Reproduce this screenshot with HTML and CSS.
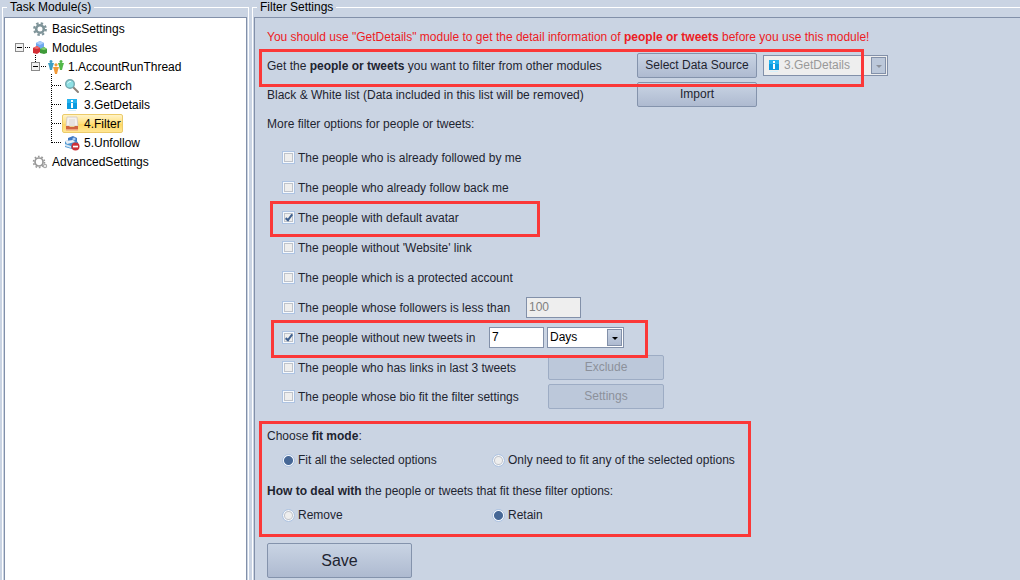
FILE: index.html
```html
<!DOCTYPE html>
<html>
<head>
	<meta charset="utf-8">
	<title>Filter Settings</title>
	<link rel="stylesheet" href="styles.css">
</head>
<body>

<!-- Module tree -->
<fieldset class="panel modules">
	<legend>Task Module(s)</legend>
	<div class="tree">
		<ul>
			<li>
				<div class="node">
					<svg class="icon" viewBox="0 0 16 16"><circle cx="8" cy="8" r="3.8" fill="none" stroke="#7f9499" stroke-width="2.6"/><circle cx="8" cy="8" r="5.8" fill="none" stroke="#7f9499" stroke-width="2.2" stroke-dasharray="2.4 2.155"/></svg>
					<span>BasicSettings</span>
				</div>
			</li>
			<li>
				<div class="node">
					<button class="toggle" aria-label="Collapse Modules"></button>
					<svg class="icon" viewBox="0 0 16 16"><path d="M4 3l4-2 4 2v5l-4 2-4-2z" fill="#6fa8ee"/><path d="M4 3l4-2 4 2-4 2z" fill="#a8cdfa"/><path d="M1 8l4-2 3 2v4l-3 2-4-1z" fill="#d32f35"/><path d="M1 8l4-2 3 2-3 1z" fill="#ef6a6a"/><path d="M8 9l4-2 3 2v4l-3 1-4-1z" fill="#3f9a3a"/><path d="M8 9l4-2 3 2-3 1z" fill="#7ed06c"/></svg>
					<span>Modules</span>
				</div>
				<ul class="short">
					<li>
						<div class="node">
							<button class="toggle" aria-label="Collapse AccountRunThread"></button>
							<svg class="icon" viewBox="0 0 16 16"><g fill="#3d9fc4"><circle cx="3" cy="2.6" r="1.5"/><path d="M0 4h6L5 7 4 11H2L1 7z"/></g><g fill="#52b848"><circle cx="13" cy="2.6" r="1.5"/><path d="M10 4h6l-1 3-1 4h-2l-1-4z"/></g><g fill="#f39a38"><circle cx="8" cy="5.8" r="1.6"/><path d="M5 8h6l-1 3-1 4H7l-1-4z"/></g></svg>
							<span>1.AccountRunThread</span>
						</div>
						<ul class="leaves">
							<li>
								<div class="node">
									<svg class="icon" viewBox="0 0 16 16"><path d="M9 9l5 5" stroke="#8b8178" stroke-width="2" stroke-linecap="round"/><circle cx="6" cy="6" r="4.3" fill="#8fe0e4" stroke="#74a9b0" stroke-width="1.4"/><path d="M3.5 5.5Q4.5 3.2 7 3.4" stroke="#e2fbfb" fill="none"/></svg>
									<span>2.Search</span>
								</div>
							</li>
							<li>
								<div class="node">
									<svg class="icon" viewBox="0 0 16 16"><path d="M3 2h10v10H3z" fill="#0c9be0"/><path d="M3 2h10v4H3z" fill="#27b3ee"/><path d="M7 3h2v2H7zM7 6h2v5H7z" fill="#fff"/><path d="M4 13h8v1H4z" fill="#d5f0fb"/></svg>
									<span>3.GetDetails</span>
								</div>
							</li>
							<li>
								<div class="node selected">
									<svg class="icon" viewBox="0 0 16 16"><path d="M3 1h10l1 9H2z" fill="#f4f1ee" stroke="#cfc7c0" stroke-width=".8"/><path d="M5 4h6M5 6h6M5 8h6" stroke="#d9d4d0"/><path d="M2 10h3l1 1h4l1-1h3v4H2z" fill="#cf6440"/><path d="M2 13h12v1.5H2z" fill="#eba27c"/></svg>
									<span>4.Filter</span>
								</div>
							</li>
							<li>
								<div class="node">
									<svg class="icon" viewBox="0 0 16 16"><path d="M4 3l5-2 4 2v4H4z" fill="#3f78c4"/><circle cx="10" cy="4" r="1.6" fill="#a9cdf4"/><path d="M1 6l8-1 5 2v5l-6 2-7-2z" fill="#4b96d2"/><path d="M1 6l8-1 2 2-8 2z" fill="#e8eef4"/><path d="M1 9l6 2v2l-6-2z" fill="#d8e6f2"/><circle cx="11.5" cy="11.5" r="4" fill="#cc3038"/><path d="M9 10.7h5v1.7H9z" fill="#fff"/></svg>
									<span>5.Unfollow</span>
								</div>
							</li>
						</ul>
					</li>
				</ul>
			</li>
			<li>
				<div class="node">
					<svg class="icon" viewBox="0 0 16 16"><circle cx="7" cy="8" r="4" fill="none" stroke="#999" stroke-width="1.7"/><circle cx="7" cy="8" r="5.5" fill="none" stroke="#999" stroke-width="1.6" stroke-dasharray="1.7 1.756"/><circle cx="13" cy="12" r="1.6" fill="none" stroke="#aaa" stroke-width="1.2"/></svg>
					<span>AdvancedSettings</span>
				</div>
			</li>
		</ul>
	</div>
</fieldset>

<!-- Settings of the selected module -->
<fieldset class="panel settings">
	<legend>Filter Settings</legend>
	<form class="content" onsubmit="return false;">
		<div class="row warning"><p>You should use "GetDetails" module to get the detail information of <b>people or tweets</b> before you use this module!</p></div>
		<div class="row mark mark-source">
			<label class="source-label" for="source">Get the <b>people or tweets</b> you want to filter from other modules</label>
			<button class="btn">Select Data Source</button>
			<span class="combo combo-source disabled">
				<svg class="icon" viewBox="0 0 16 16"><path d="M3 2h10v10H3z" fill="#0c9be0"/><path d="M3 2h10v4H3z" fill="#27b3ee"/><path d="M7 3h2v2H7zM7 6h2v5H7z" fill="#fff"/><path d="M4 13h8v1H4z" fill="#d5f0fb"/></svg>
				<select id="source" disabled><option>3.GetDetails</option></select>
			</span>
		</div>
		<div class="row">
			<label class="source-label" for="import">Black &amp; White list (Data included in this list will be removed)</label>
			<button class="btn" id="import">Import</button>
		</div>
		<div class="row"><p>More filter options for people or tweets:</p></div>

		<div class="options">
			<div class="option"><input type="checkbox" id="o1"><label for="o1">The people who is already followed by me</label></div>
			<div class="option"><input type="checkbox" id="o2"><label for="o2">The people who already follow back me</label></div>
			<div class="option mark mark-avatar"><input type="checkbox" id="o3" checked><label for="o3">The people with default avatar</label></div>
			<div class="option"><input type="checkbox" id="o4"><label for="o4">The people without 'Website' link</label></div>
			<div class="option"><input type="checkbox" id="o5"><label for="o5">The people which is a protected account</label></div>
			<div class="option">
				<input type="checkbox" id="o6"><label class="followers" for="o6">The people whose followers is less than</label>
				<input type="text" class="field" value="100" aria-label="Followers" disabled>
			</div>
			<div class="option mark mark-days">
				<input type="checkbox" id="o7" checked><label class="period" for="o7">The people without new tweets in</label>
				<input type="text" class="field" value="7" aria-label="Period">
				<span class="combo combo-days"><select aria-label="Unit"><option>Days</option></select></span>
			</div>
			<div class="option">
				<input type="checkbox" id="o8"><label class="more" for="o8">The people who has links in last 3 tweets</label>
				<button class="btn" disabled>Exclude</button>
			</div>
			<div class="option">
				<input type="checkbox" id="o9"><label class="more" for="o9">The people whose bio fit the filter settings</label>
				<button class="btn" disabled>Settings</button>
			</div>
		</div>

		<div class="modes">
			<p>Choose <b>fit mode</b>:</p>
			<div class="radios">
				<div><input type="radio" name="fit" id="fitall" checked><label for="fitall">Fit all the selected options</label></div>
				<div><input type="radio" name="fit" id="fitany"><label for="fitany">Only need to fit any of the selected options</label></div>
			</div>
			<p><b>How to deal with</b> the people or tweets that fit these filter options:</p>
			<div class="radios">
				<div><input type="radio" name="deal" id="remove"><label for="remove">Remove</label></div>
				<div><input type="radio" name="deal" id="retain" checked><label for="retain">Retain</label></div>
			</div>
		</div>

		<button class="btn save">Save</button>
	</form>
</fieldset>

</body>
</html>
```
FILE: styles.css
```css
*, *::before, *::after {
	box-sizing: border-box;
}

body {
	margin: 0;
	padding-left: 2px;
	min-height: 100vh;
	display: flex;
	gap: 3px;
	background: #cad4e3;
	color: #1e2430;
	font: 12px/15px "Liberation Sans", Arial, sans-serif;
}

p, ul {
	margin: 0;
	padding: 0;
	list-style: none;
}

button, input, select {
	font: inherit;
	color: inherit;
	margin: 0;
}

/* Titled panels, open at the bottom */
.panel {
	display: flex;
	margin: 0;
	padding: 2px 1px 0;
	border: 1px solid #fff;
	border-bottom: 0;
	min-width: 0;
}

.panel legend {
	margin-left: 3px;
	padding: 0 3px;
	color: #000;
}

.modules {
	flex: 0 0 247px;
}

.settings {
	flex: 1;
	border-right: 0;
	padding-right: 0;
}

.tree, .content {
	flex: 1;
	border: 1px solid #8290a9;
	border-bottom: 0;
}

.content {
	border-right: 0;
	padding: 4px 12px 0;
}

/* Tree */
.tree {
	background: #fff;
	color: #000;
	padding: 1px 10px;
}

.tree ul ul {
	position: relative;
	padding-left: 16px;
}

.node {
	position: relative;
	display: flex;
	align-items: center;
	width: fit-content;
	height: 19px;
	padding-left: 17px;
	gap: 4px;
}

.node span {
	padding-top: 1px;
}

.icon {
	flex: none;
	width: 16px;
	height: 16px;
}

.toggle {
	position: relative;
	width: 9px;
	height: 9px;
	margin-left: -17px;
	margin-right: 4px;
	padding: 0;
	border: 1px solid #8a8a8a;
	background: linear-gradient(#000, #000) center / 5px 1px no-repeat #f2f2f2;
}

.toggle::after {
	content: "";
	position: absolute;
	left: 9px;
	top: 3px;
	width: 5px;
	border-top: 1px dotted #000;
}

.short::before, .leaves::before {
	content: "";
	position: absolute;
	left: 20px;
	top: -2px;
	height: 7px;
	border-left: 1px dotted #000;
}

.leaves::before {
	height: 69px;
}

.leaves .node::before {
	content: "";
	position: absolute;
	left: 5px;
	top: 9px;
	width: 9px;
	border-top: 1px dotted #000;
}

.selected::after {
	content: "";
	position: absolute;
	inset: 0 -2px 0 15px;
	border: 1px solid #eccb6a;
	border-radius: 2px;
	background: linear-gradient(#fff3c8, #ffe07c 50%, #ffd75f 51%, #ffe694);
}

.selected .icon, .selected span {
	position: relative;
	z-index: 1;
}

/* Rows of the form */
.row, .option {
	display: flex;
	align-items: center;
	height: 29px;
	white-space: nowrap;
}

.row p, .row label, .option label {
	padding-top: 2px;
}

.warning {
	color: #ed1c24;
}

.source-label {
	width: 370px;
}

.options {
	padding: 4px 0 0 15px;
}

.option {
	height: 30px;
}

.option:last-child {
	height: 29px;
}

.option label, .radios label {
	margin-left: 3px;
}

.option .followers {
	width: 228px;
}

.option .period {
	width: 191px;
}

.option .more {
	width: 250px;
}

/* Buttons */
.btn {
	width: 120px;
	height: 25px;
	padding: 0;
	border: 1px solid #8493ac;
	border-radius: 2px;
	background: linear-gradient(#c9d4e4, #aebad0);
}

.option .btn {
	width: 116px;
}

.btn:disabled {
	border-color: #9dacc4;
	background: #bcc8da;
	color: #8c919b;
}

.save {
	display: block;
	width: 145px;
	height: 35px;
	margin-top: 6px;
	font-size: 16px;
}

/* Text boxes and drop-downs */
.field {
	width: 55px;
	height: 21px;
	padding: 0 2px;
	border: 1px solid #8290a9;
	border-radius: 0;
	background: #fff;
	color: #000;
}

.field:disabled {
	background: #eee;
	color: #808080;
}

.combo {
	position: relative;
	display: flex;
	height: 21px;
	border: 1px solid #8290a9;
	background: #fff;
	color: #000;
}

.combo select {
	flex: 1;
	padding: 0 2px;
	border: 0;
	background: none;
	appearance: none;
	opacity: 1;
}

.combo::before {
	content: "";
	position: absolute;
	top: 1px;
	right: 1px;
	width: 15px;
	height: 17px;
	border: 1px solid #8290a9;
	background: linear-gradient(#c9d4e4, #aebad0);
	pointer-events: none;
}

.combo::after {
	content: "";
	position: absolute;
	top: 9px;
	right: 5px;
	border: 3px solid transparent;
	border-top-color: #000;
	border-bottom: 0;
	pointer-events: none;
}

.combo.disabled {
	background: #eee;
	color: #999;
}

.combo.disabled::before {
	background: #bcc8da;
}

.combo.disabled::after {
	border-top-color: #8c919b;
}

.combo-source {
	width: 125px;
	margin-left: 6px;
	padding-left: 2px;
	align-items: center;
}

.combo-days {
	width: 77px;
	margin-left: 3px;
}

/* Check boxes and radio buttons */
input[type=checkbox], input[type=radio] {
	appearance: none;
	position: relative;
	flex: none;
	width: 13px;
	height: 13px;
	border: 1px solid #adc3e2;
	background: #eee;
	box-shadow: inset 0 0 0 1px #f6f9fd, inset 0 0 0 2px #bfc3ca;
}

input[type=checkbox]:checked::after {
	content: "";
	position: absolute;
	left: 4px;
	top: 1px;
	width: 4px;
	height: 8px;
	border: solid #3f608f;
	border-width: 0 2px 2px 0;
	transform: rotate(38deg);
}

input[type=radio] {
	border-radius: 50%;
}

input[type=radio]:checked {
	background: radial-gradient(circle, #466796 4px, #f3f6fb 5px);
	box-shadow: none;
}

/* Red frames round the recommended settings */
.mark {
	position: relative;
}

.mark::after {
	content: "";
	position: absolute;
	z-index: 2;
	border: 3px solid #fb3838;
	pointer-events: none;
}

.mark-source::after {
	left: -8px;
	top: -2px;
	width: 605px;
	height: 38px;
}

.mark-avatar::after {
	left: -12px;
	top: -1px;
	width: 270px;
	height: 36px;
}

.mark-days::after {
	left: -11px;
	top: -2px;
	width: 377px;
	height: 38px;
}

.modes {
	width: 492px;
	margin: 10px 0 0 -8px;
	padding: 0 5px 7px;
	border: 3px solid #fb3838;
	line-height: 24px;
}

.radios {
	display: grid;
	grid-template-columns: 210px 1fr;
	padding-left: 15px;
	white-space: nowrap;
}

.radios div {
	display: flex;
	align-items: center;
}

.radios + p {
	margin-top: 7px;
}
```
